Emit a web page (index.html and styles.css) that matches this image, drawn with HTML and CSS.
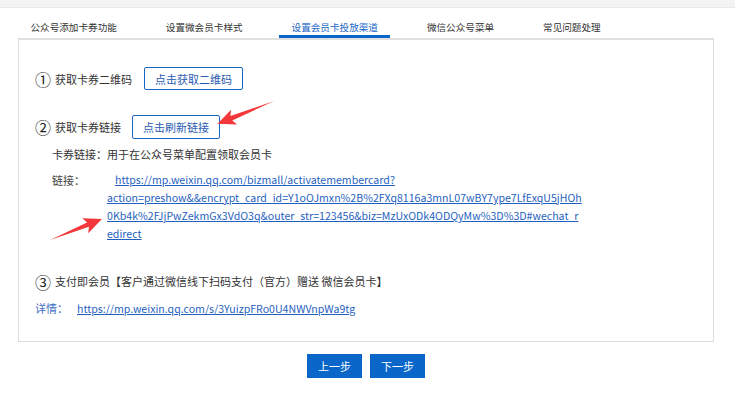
FILE: index.html
```html
<!DOCTYPE html>
<html lang="zh-CN">
<head>
<meta charset="utf-8">
<title>设置会员卡投放渠道</title>
<link rel="stylesheet" href="styles.css">
</head>
<body>
<div class="topbar"></div>
<nav class="tabs">
  <span class="tab">公众号添加卡券功能</span>
  <span class="tab">设置微会员卡样式</span>
  <span class="tab active">设置会员卡投放渠道</span>
  <span class="tab">微信公众号菜单</span>
  <span class="tab">常见问题处理</span>
</nav>
<section class="panel">
  <div class="step step1">
    <span class="num">①</span><span class="label">获取卡券二维码</span>
    <button class="outline-btn btn-qr">点击获取二维码</button>
  </div>
  <div class="step step2">
    <span class="num">②</span><span class="label">获取卡券链接</span>
    <button class="outline-btn btn-link">点击刷新链接</button>
  </div>
  <p class="note">卡券链接：用于在公众号菜单配置领取会员卡</p>
  <div class="linkrow">
    <span class="linklabel">链接：</span>
    <a class="cardlink" href="#">https://mp.weixin.qq.com/bizmall/activatemembercard?<br>action=preshow&amp;&amp;encrypt_card_id=Y1oOJmxn%2B%2FXq8116a3mnL07wBY7ype7LfExqU5jHOh<br>0Kb4k%2FJjPwZekmGx3VdO3q&amp;outer_str=123456&amp;biz=MzUxODk4ODQyMw%3D%3D#wechat_r<br>edirect</a>
  </div>
  <div class="step step3">
    <span class="num">③</span><span class="label">支付即会员【客户通过微信线下扫码支付（官方）赠送 微信会员卡】</span>
  </div>
  <div class="detail">
    <span class="detaillabel">详情：</span>
    <a class="detaillink" href="#">https://mp.weixin.qq.com/s/3YuizpFRo0U4NWVnpWa9tg</a>
  </div>
</section>
<div class="actions">
  <button class="solid-btn">上一步</button>
  <button class="solid-btn">下一步</button>
</div>
<svg class="arrows" width="735" height="399" viewBox="0 0 735 399">
  <g transform="translate(274 101) rotate(158)" fill="#f2383a">
    <polygon points="0,0 46,-2.4 43,-8 61,0 43,8 46,2.4"/>
  </g>
  <g transform="translate(50 240) rotate(-22)" fill="#f2383a">
    <polygon points="0,0 41,-2.4 38,-8 56,0 38,8 41,2.4"/>
  </g>
</svg>
</body>
</html>
```
FILE: styles.css
```css
* { box-sizing: border-box; }
html, body { margin: 0; padding: 0; }
body {
  width: 735px;
  height: 399px;
  overflow: hidden;
  background: #fff;
  font-family: "Noto Sans CJK SC", "Noto Sans", sans-serif;
  font-size: 11px;
  color: #333;
  position: relative;
}
.topbar {
  height: 8px;
  background: #f3f3f3;
  border-bottom: 1px solid #e8e8e8;
}
.tabs {
  display: flex;
  padding: 12px 0 0 18px;
  height: 30px;
}
.tab {
  font-size: 9.6px;
  line-height: 15px;
  padding: 0 12.5px;
  margin-right: 24px;
  color: #333;
  border-bottom: 3px solid transparent;
  height: 18px;
}
.tab.active {
  color: #1a66c6;
  border-bottom-color: #0a66c8;
}
.panel {
  margin: 0 21px 0 18px;
  height: 304px;
  border: 1px solid #dcdcdc;
  border-top-width: 2px;
  border-top-color: #e0e0e0;
  padding: 27px 16px 0 16px;
}
.step {
  display: flex;
  align-items: center;
}
.num {
  font-size: 16px;
  line-height: 16px;
  margin-right: 4px;
  color: #222;
}
.label { color: #333; }
.outline-btn {
  font-family: inherit;
  font-size: 11px;
  background: #fff;
  color: #2a5bb0;
  border: 1px solid #1a66c6;
  border-radius: 2px;
  padding: 0 10px;
  cursor: pointer;
}
.btn-qr { height: 23px; margin-left: 12px; }
.btn-link { height: 24px; margin-left: 11px; }
.step2 { margin-top: 25px; }
.note {
  margin: 7px 0 0 17px;
  line-height: 17px;
}
.linkrow {
  display: flex;
  margin: 8px 0 0 17px;
  line-height: 18px;
}
.linklabel {
  width: 55px;
  flex: none;
  color: #444;
}
.cardlink, .detaillink {
  color: #1f5fc0;
  text-decoration: underline;
  white-space: nowrap;
  font-size: 10.6px;
}
.cardlink {
  display: block;
  text-indent: 8px;
}
.step3 { margin-top: 30px; line-height: 17px; }
.detail {
  margin-top: 10px;
  line-height: 17px;
  display: flex;
  align-items: baseline;
}
.detaillabel {
  color: #3d6ec6;
  width: 42px;
  flex: none;
}
.actions {
  display: flex;
  justify-content: center;
  gap: 8px;
  margin: 12px 21px 0 18px;
}
.solid-btn {
  font-family: inherit;
  font-size: 11px;
  width: 55px;
  height: 24px;
  border: none;
  border-radius: 0;
  background: #0a67c9;
  color: #fff;
  cursor: pointer;
}
.arrows {
  position: absolute;
  left: 0;
  top: 0;
  pointer-events: none;
}
```
